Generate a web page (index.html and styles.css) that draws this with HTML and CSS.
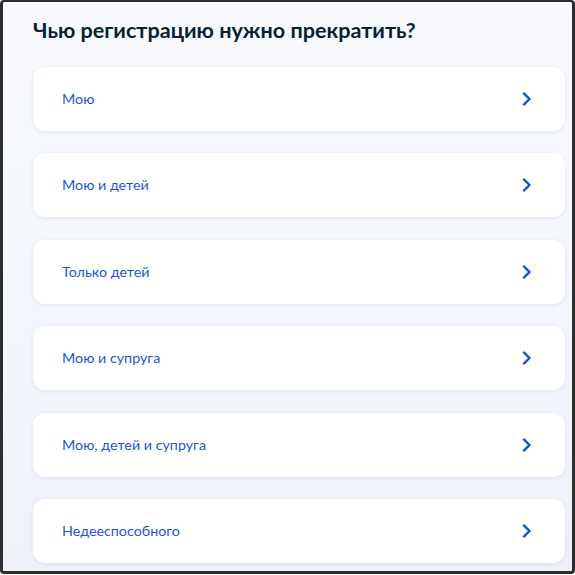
FILE: index.html
```html
<!DOCTYPE html>
<html lang="ru">
<head>
<meta charset="utf-8">
<link rel="stylesheet" href="styles.css">
</head>
<body>
<div class="frame">
  <h1 class="title">Чью регистрацию нужно прекратить?</h1>
  <div class="list">
    <a class="card"><span>Мою</span><svg class="chev" viewBox="0 0 10 14"><path d="M2 1.5 L7.5 7 L2 12.5" fill="none" stroke="#0d4cd3" stroke-width="2.4" stroke-linecap="round" stroke-linejoin="round"/></svg></a>
    <a class="card"><span>Мою и детей</span><svg class="chev" viewBox="0 0 10 14"><path d="M2 1.5 L7.5 7 L2 12.5" fill="none" stroke="#0d4cd3" stroke-width="2.4" stroke-linecap="round" stroke-linejoin="round"/></svg></a>
    <a class="card"><span>Только детей</span><svg class="chev" viewBox="0 0 10 14"><path d="M2 1.5 L7.5 7 L2 12.5" fill="none" stroke="#0d4cd3" stroke-width="2.4" stroke-linecap="round" stroke-linejoin="round"/></svg></a>
    <a class="card"><span>Мою и супруга</span><svg class="chev" viewBox="0 0 10 14"><path d="M2 1.5 L7.5 7 L2 12.5" fill="none" stroke="#0d4cd3" stroke-width="2.4" stroke-linecap="round" stroke-linejoin="round"/></svg></a>
    <a class="card"><span>Мою, детей и супруга</span><svg class="chev" viewBox="0 0 10 14"><path d="M2 1.5 L7.5 7 L2 12.5" fill="none" stroke="#0d4cd3" stroke-width="2.4" stroke-linecap="round" stroke-linejoin="round"/></svg></a>
    <a class="card"><span>Недееспособного</span><svg class="chev" viewBox="0 0 10 14"><path d="M2 1.5 L7.5 7 L2 12.5" fill="none" stroke="#0d4cd3" stroke-width="2.4" stroke-linecap="round" stroke-linejoin="round"/></svg></a>
  </div>
</div>
</body>
</html>
```

FILE: styles.css
```css
html, body {
  margin: 0;
  padding: 0;
  background: #ffffff;
}
body {
  font-family: Lato, "Noto Sans", sans-serif;
}
.frame {
  box-sizing: border-box;
  width: 575px;
  height: 574px;
  border: 3px solid #2e2e2e;
  border-top-width: 2px;
  border-radius: 4px;
  background: linear-gradient(180deg, #f8faff 0%, #f3f6fc 60%, #eef1f8 100%);
  padding: 13px 7px 0 30px;
  overflow: hidden;
}
.title {
  margin: 0;
  font-size: 21.6px;
  line-height: 30px;
  font-weight: 700;
  color: #0b1f33;
}
.list {
  display: flex;
  flex-direction: column;
  gap: 22.4px;
  margin-top: 22px;
}
.card {
  box-sizing: border-box;
  height: 64px;
  background: #ffffff;
  border-radius: 12px;
  box-shadow: 0 1px 4px rgba(40, 70, 140, 0.10);
  display: flex;
  align-items: center;
  justify-content: space-between;
  padding: 0 33px 0 29px;
  color: #1d55d6;
  font-size: 14.3px;
  text-decoration: none;
}
.card span {
  margin-top: -1px;
}
.chev {
  width: 10px;
  height: 14px;
  display: block;
}
```
